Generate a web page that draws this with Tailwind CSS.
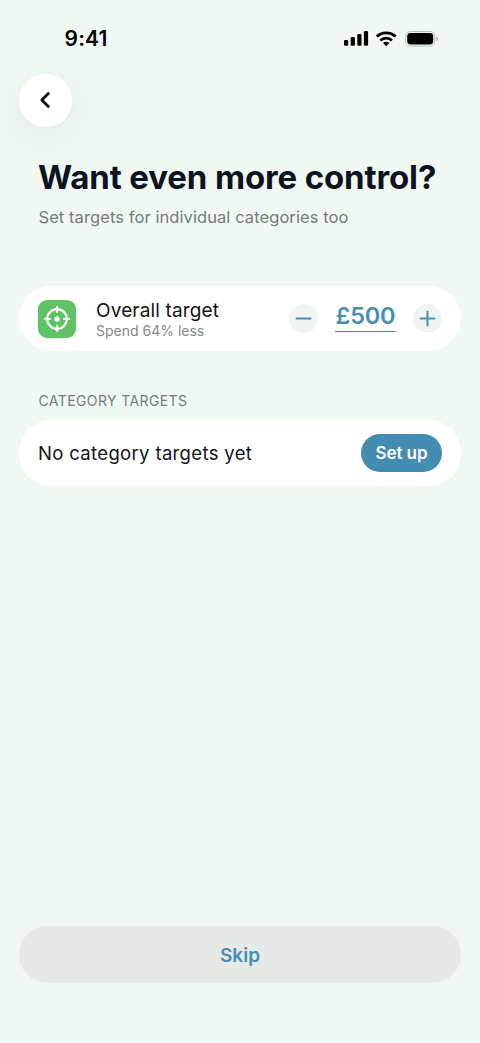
<!DOCTYPE html>
<html lang="en">
<head>
<meta charset="utf-8">
<meta name="viewport" content="width=device-width, initial-scale=1">
<title>Spending targets</title>
<script src="https://cdn.jsdelivr.net/npm/@tailwindcss/browser@4"></script>
</head>
<body class="bg-[#f1f8f2] font-['Inter',sans-serif] text-[#101418]">
<div class="flex h-[1043px] w-[480px] flex-col overflow-hidden px-[19px] whitespace-nowrap">
  <header class="flex h-[73.5px] shrink-0 items-start justify-between pt-[26px] pr-[22px] pl-[45.5px]">
    <span class="text-[21px] leading-[26px] font-semibold tracking-[0.2px] text-black">9:41</span>
    <svg class="mt-[3px]" width="96" height="20" viewBox="343 29 96 20" fill="#000">
      <rect x="344" y="40" width="4.2" height="5.8" rx="1.2"/>
      <rect x="350.7" y="37" width="4.2" height="8.8" rx="1.2"/>
      <rect x="357.3" y="34" width="4.2" height="11.8" rx="1.2"/>
      <rect x="363.9" y="31" width="4.2" height="14.8" rx="1.2"/>
      <g fill="none" stroke="#000" stroke-width="2.8">
        <path d="M376.8 36.6a13.6 13.6 0 0 1 18.8 0"/>
        <path d="M380.4 40.5a8.4 8.4 0 0 1 11.6 0"/>
      </g>
      <path d="M386.2 46.3l-3.2-3.3a4.6 4.6 0 0 1 6.4 0z"/>
      <rect x="405.6" y="31.5" width="29.2" height="14.6" rx="4.8" fill="none" stroke="#b9c0bb"/>
      <rect x="407.2" y="33.1" width="26" height="11.4" rx="3.4"/>
      <path d="M436.3 36.7c2.4.8 2.4 3.6 0 4.4z" fill="#a9afab"/>
    </svg>
  </header>
  <button class="flex size-[53px] shrink-0 items-center justify-center rounded-full bg-white shadow-[0_10px_36px_rgba(0,0,0,0.06)]" aria-label="Back">
    <svg class="-ml-px" width="20" height="20" viewBox="0 0 20 20" fill="none" stroke="#101010" stroke-width="2.8" stroke-linecap="round" stroke-linejoin="round"><path d="M13.4 3.4L6.8 10l6.6 6.6"/></svg>
  </button>
  <h1 class="mt-[30.5px] pl-[19px] text-[33px] leading-[40px] font-bold tracking-[-0.13px] text-[#0b1420]">Want even more control?</h1>
  <p class="mt-[8px] pl-[19.5px] text-[16.5px] leading-[24px] tracking-[0.08px] text-[#747d78]">Set targets for individual categories too</p>
  <section class="mt-[57px] flex h-[65px] shrink-0 items-center rounded-[32.5px] bg-white px-[19px]">
    <div class="mt-px flex size-[38px] items-center justify-center rounded-[9px] bg-[#5fc264]">
      <svg width="28" height="28" viewBox="-14 -14 28 28" fill="none" stroke="#fff" stroke-width="2.2">
        <circle r="9.8"/><circle r="2.7" fill="#fff" stroke="none"/>
        <path stroke-linecap="round" d="M0-12v5M0 12V7M-12 0h5M12 0H7"/>
      </svg>
    </div>
    <div class="ml-[20px] w-[193px] pt-[1px]">
      <div class="text-[19px] leading-[22px] tracking-[0.15px]">Overall target</div>
      <div class="text-[14px] leading-[17px] text-[#858888]">Spend 64% less</div>
    </div>
    <button class="flex size-[29px] items-center justify-center rounded-full bg-[#f1f5f2]" aria-label="Decrease">
      <svg width="17" height="17" viewBox="0 0 17 17" stroke="#468fb3" stroke-width="2" stroke-linecap="round"><path d="M1.5 8.5h14"/></svg>
    </button>
    <div class="mb-[3px] ml-[17px] h-[29px] w-[61px] border-b border-[#468fb3] text-center text-[23.5px] leading-[26px] font-semibold tracking-[-0.2px] text-[#468fb3]">£500</div>
    <button class="ml-auto flex size-[29px] items-center justify-center rounded-full bg-[#f1f5f2]" aria-label="Increase">
      <svg width="17" height="17" viewBox="0 0 17 17" stroke="#468fb3" stroke-width="2" stroke-linecap="round"><path d="M1.5 8.5h14M8.5 1.5v14"/></svg>
    </button>
  </section>
  <h2 class="mt-[41px] pl-[19.5px] text-[14px] leading-[18px] tracking-[0.4px] text-[#747d78]">CATEGORY TARGETS</h2>
  <section class="mt-[10px] flex h-[65.5px] shrink-0 items-center justify-between rounded-[33px] bg-white px-[19px]">
    <span class="text-[18.5px] leading-[24px] tracking-[0.34px]">No category targets yet</span>
    <button class="h-[38px] w-[81px] rounded-full bg-[#438cb2] pt-[1px] text-[17px] leading-[24px] font-semibold tracking-[-0.1px] text-white">Set up</button>
  </section>
  <button class="mt-auto mb-[60px] h-[57px] shrink-0 rounded-full bg-[#e5eae6] pt-[2px] text-[19px] leading-[26px] font-semibold text-[#468fb3]">Skip</button>
</div>
</body>
</html>
